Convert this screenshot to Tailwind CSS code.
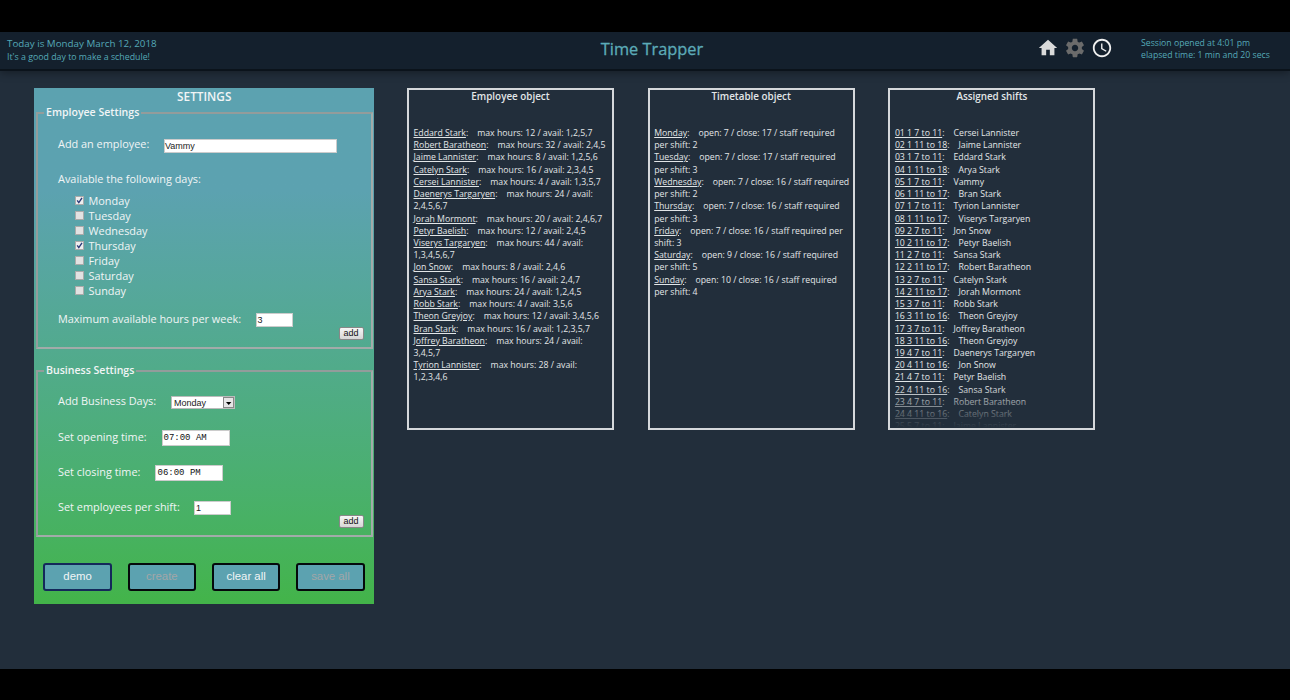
<!DOCTYPE html>
<html lang="en">
<head>
<meta charset="utf-8">
<title>Time Trapper</title>
<script src="https://cdn.jsdelivr.net/npm/@tailwindcss/browser@4"></script>
</head>
<body class="h-[700px] overflow-hidden bg-black py-8 font-['Open_Sans',sans-serif]">
<div class="flex h-[637px] flex-col bg-[#222e3b]">

  <header class="relative z-10 flex h-[39px] shrink-0 items-start border-b-2 border-[#0b131b] bg-[#14202d] text-[#55a9b7] shadow-[0_2px_8px_rgba(0,0,0,0.35)]">
    <div class="w-[552px] pt-[5px] pl-[7px]">
      <p class="text-[9.8px] leading-[14px]">Today is Monday March 12, 2018</p>
      <p class="text-[8.8px] leading-[12px]">It's a good day to make a schedule!</p>
    </div>
    <h1 class="w-[200px] pt-[5px] text-center text-[16.38px] leading-[24px] text-[#5cabb8] [-webkit-text-stroke:0.3px_#5cabb8]">Time Trapper</h1>
    <div class="ml-[285px] flex gap-[5px] pt-[5px]">
      <svg class="size-[22px]" viewBox="0 0 24 24" fill="#dadada"><path d="M10 20v-6h4v6h5v-8h3L12 3 2 12h3v8z"/></svg>
      <svg class="size-[22px]" viewBox="0 0 24 24" fill="#6b6b6b"><path d="M19.43 12.98c.04-.32.07-.64.07-.98s-.03-.66-.07-.98l2.11-1.65c.19-.15.24-.42.12-.64l-2-3.46c-.12-.22-.39-.3-.61-.22l-2.49 1c-.52-.4-1.08-.73-1.69-.98l-.38-2.65C14.46 2.18 14.25 2 14 2h-4c-.25 0-.46.18-.49.42l-.38 2.65c-.61.25-1.17.59-1.69.98l-2.49-1c-.23-.09-.49 0-.61.22l-2 3.46c-.13.22-.07.49.12.64l2.11 1.65c-.04.32-.07.65-.07.98s.03.66.07.98l-2.11 1.65c-.19.15-.24.42-.12.64l2 3.46c.12.22.39.3.61.22l2.49-1c.52.4 1.08.73 1.69.98l.38 2.65c.03.24.24.42.49.42h4c.25 0 .46-.18.49-.42l.38-2.65c.61-.25 1.17-.59 1.69-.98l2.49 1c.23.09.49 0 .61-.22l2-3.46c.12-.22.07-.49-.12-.64l-2.11-1.65zM12 15.5c-1.93 0-3.5-1.57-3.5-3.5s1.57-3.5 3.5-3.5 3.5 1.57 3.5 3.5-1.57 3.5-3.5 3.5z"/></svg>
      <svg class="size-[22px]" viewBox="0 0 24 24" fill="#f0f0f0"><path d="M11.99 2C6.47 2 2 6.48 2 12s4.47 10 9.99 10C17.52 22 22 17.52 22 12S17.52 2 11.99 2zM12 20c-4.42 0-8-3.58-8-8s3.58-8 8-8 8 3.58 8 8-3.58 8-8 8zm.5-13H11v6l5.25 3.15.75-1.23-4.5-2.67z"/></svg>
    </div>
    <div class="ml-[28px] pt-[5px] text-[8.7px] leading-[12.2px] whitespace-nowrap">
      <p>Session opened at 4:01 pm</p>
      <p>elapsed time: 1 min and 20 secs</p>
    </div>
  </header>

  <main class="flex items-start pt-[17px] pl-[34px] text-[#f1f5f6]">
    <section class="mr-[33.5px] flex h-[516px] w-[339.5px] shrink-0 flex-col bg-linear-to-b from-[#5ca2b0] from-20% to-[#43b449] to-100% pr-px pl-[2px] text-[10.9px] whitespace-nowrap">
      <h2 class="h-[17px] text-center text-[11.8px] leading-[16px] font-semibold">SETTINGS</h2>

      <fieldset class="h-[244px] min-w-0 border-2 border-t-[#939c9b] border-r-[#a2aba9] border-b-[#a2aba9] border-l-[#939c9b] [border-style:double] px-[20px]">
        <legend class="-ml-[14px] h-[15px] px-[2px] text-[10.55px] leading-[15px] font-semibold">Employee Settings</legend>
        <div class="mt-[17px] flex h-[16px] items-center">
          <span class="w-[106px] pb-[2px]">Add an employee:</span>
          <span class="mt-px h-[14px] w-[173px] border border-[#ccc] bg-white font-['Liberation_Sans',sans-serif] text-[9px] leading-[12px] text-[#222]">Vammy</span>
        </div>
        <p class="mt-[18px] h-[17px] leading-[16px]">Available the following days:</p>
        <ul class="mt-[5px] pl-[17px] leading-[15px]">
          <li class="flex h-[15px] items-center gap-[4.5px]"><svg class="size-[9px]" viewBox="0 0 9 9"><rect x=".5" y=".5" width="8" height="8" fill="#eee" stroke="#aaa"/><path d="M2.2 4.4 3.8 6.6 7 1.8" fill="none" stroke="#2b3a78" stroke-width="1.4"/></svg>Monday</li>
          <li class="flex h-[15px] items-center gap-[4.5px]"><svg class="size-[9px]" viewBox="0 0 9 9"><rect x=".5" y=".5" width="8" height="8" fill="#e2e2e2" stroke="#aaa"/></svg>Tuesday</li>
          <li class="flex h-[15px] items-center gap-[4.5px]"><svg class="size-[9px]" viewBox="0 0 9 9"><rect x=".5" y=".5" width="8" height="8" fill="#e2e2e2" stroke="#aaa"/></svg>Wednesday</li>
          <li class="flex h-[15px] items-center gap-[4.5px]"><svg class="size-[9px]" viewBox="0 0 9 9"><rect x=".5" y=".5" width="8" height="8" fill="#eee" stroke="#aaa"/><path d="M2.2 4.4 3.8 6.6 7 1.8" fill="none" stroke="#2b3a78" stroke-width="1.4"/></svg>Thursday</li>
          <li class="flex h-[15px] items-center gap-[4.5px]"><svg class="size-[9px]" viewBox="0 0 9 9"><rect x=".5" y=".5" width="8" height="8" fill="#e2e2e2" stroke="#aaa"/></svg>Friday</li>
          <li class="flex h-[15px] items-center gap-[4.5px]"><svg class="size-[9px]" viewBox="0 0 9 9"><rect x=".5" y=".5" width="8" height="8" fill="#e2e2e2" stroke="#aaa"/></svg>Saturday</li>
          <li class="flex h-[15px] items-center gap-[4.5px]"><svg class="size-[9px]" viewBox="0 0 9 9"><rect x=".5" y=".5" width="8" height="8" fill="#e2e2e2" stroke="#aaa"/></svg>Sunday</li>
        </ul>
        <div class="mt-[13px] flex h-[16px] items-center">
          <span class="w-[197.5px]">Maximum available hours per week:</span>
          <span class="mt-px h-[14px] w-[37px] border border-[#ccc] bg-white pl-px font-['Liberation_Sans',sans-serif] text-[9px] leading-[12px] text-[#222]">3</span>
        </div>
        <div class="-mr-[13px] flex justify-end"><span class="h-[13px] w-[25px] rounded-[2px] border border-[#888] bg-linear-to-b from-[#f6f6f6] to-[#d6d6d6] text-center font-['Liberation_Sans',sans-serif] text-[9px] leading-[11px] text-[#111]">add</span></div>
      </fieldset>

      <fieldset class="mt-[14px] h-[174px] min-w-0 border-2 border-t-[#939c9b] border-r-[#a2aba9] border-b-[#a2aba9] border-l-[#939c9b] [border-style:double] px-[20px]">
        <legend class="-ml-[14px] h-[15px] px-[2px] text-[10.55px] leading-[15px] font-semibold">Business Settings</legend>
        <div class="mt-[16px] flex h-[16px] items-center">
          <span class="w-[113px] pb-[2px]">Add Business Days:</span>
          <span class="mt-px flex h-[13px] w-[64px] border border-[#bbb] bg-white font-['Liberation_Sans',sans-serif] text-[9px] leading-[12px] text-[#222]">
            <span class="flex-1 pl-[2px]">Monday</span>
            <svg class="h-[11px] w-[11px]" viewBox="0 0 11 11"><rect x=".5" y=".5" width="10" height="10" fill="#e6e6e6" stroke="#888"/><path d="M3 5h5.4L5.7 8z" fill="#000"/></svg>
          </span>
        </div>
        <div class="mt-[19px] flex h-[16px] items-center">
          <span class="w-[103.5px]">Set opening time:</span>
          <span class="mt-px h-[16px] w-[68px] border border-[#ccc] bg-white pl-[1px] font-['Liberation_Mono',monospace] text-[9px] leading-[15px] text-[#111]">07:00 AM</span>
        </div>
        <div class="mt-[19px] flex h-[16px] items-center">
          <span class="w-[96.5px]">Set closing time:</span>
          <span class="mt-[2px] h-[16px] w-[68px] border border-[#ccc] bg-white pl-[2px] font-['Liberation_Mono',monospace] text-[9px] leading-[15px] text-[#111]">06:00 PM</span>
        </div>
        <div class="mt-[19px] flex h-[16px] items-center">
          <span class="w-[136px]">Set employees per shift:</span>
          <span class="mt-px h-[14px] w-[37px] border border-[#ccc] bg-white pl-px font-['Liberation_Sans',sans-serif] text-[9px] leading-[12px] text-[#222]">1</span>
        </div>
        <div class="-mr-[13px] flex justify-end"><span class="h-[13px] w-[25px] rounded-[2px] border border-[#888] bg-linear-to-b from-[#f6f6f6] to-[#d6d6d6] text-center font-['Liberation_Sans',sans-serif] text-[9px] leading-[11px] text-[#111]">add</span></div>
      </fieldset>

      <div class="mt-[26px] flex gap-[16px] pl-[7.4px] font-['Liberation_Sans',sans-serif] text-[11.35px]">
        <button class="h-[28px] w-[68.3px] shrink-0 rounded-[3px] border-2 border-[#14285a] bg-[#5ca2b0]">demo</button>
        <button class="h-[28px] w-[68.3px] shrink-0 rounded-[3px] border-2 border-[#05090b] bg-[#5ca2b0] text-[#a3a6a8]">create</button>
        <button class="h-[28px] w-[68.3px] shrink-0 rounded-[3px] border-2 border-[#05090b] bg-[#5ca2b0]">clear all</button>
        <button class="h-[28px] w-[68.3px] shrink-0 rounded-[3px] border-2 border-[#05090b] bg-[#5ca2b0] text-[#a3a6a8]">save all</button>
      </div>
    </section>

    <div class="flex gap-[33.7px] text-[8.72px] leading-[12.22px] whitespace-nowrap text-[#e2e6e8]">
      <section class="h-[342px] w-[207px] border-2 border-[#d5d8db] pl-[4.5px]">
        <h2 class="h-[37px] pr-[4.5px] text-center text-[9.85px] leading-[13px] font-semibold">Employee object</h2>
        <p><u>Eddard Stark</u>:<span class="ml-[9px]">max hours: 12 / avail: 1,2,5,7</span></p>
        <p><u>Robert Baratheon</u>:<span class="ml-[9px]">max hours: 32 / avail: 2,4,5</span></p>
        <p><u>Jaime Lannister</u>:<span class="ml-[9px]">max hours: 8 / avail: 1,2,5,6</span></p>
        <p><u>Catelyn Stark</u>:<span class="ml-[9px]">max hours: 16 / avail: 2,3,4,5</span></p>
        <p><u>Cersei Lannister</u>:<span class="ml-[9px]">max hours: 4 / avail: 1,3,5,7</span></p>
        <p><u>Daenerys Targaryen</u>:<span class="ml-[9px]">max hours: 24 / avail:<br>2,4,5,6,7</span></p>
        <p><u>Jorah Mormont</u>:<span class="ml-[9px]">max hours: 20 / avail: 2,4,6,7</span></p>
        <p><u>Petyr Baelish</u>:<span class="ml-[9px]">max hours: 12 / avail: 2,4,5</span></p>
        <p><u>Viserys Targaryen</u>:<span class="ml-[9px]">max hours: 44 / avail:<br>1,3,4,5,6,7</span></p>
        <p><u>Jon Snow</u>:<span class="ml-[9px]">max hours: 8 / avail: 2,4,6</span></p>
        <p><u>Sansa Stark</u>:<span class="ml-[9px]">max hours: 16 / avail: 2,4,7</span></p>
        <p><u>Arya Stark</u>:<span class="ml-[9px]">max hours: 24 / avail: 1,2,4,5</span></p>
        <p><u>Robb Stark</u>:<span class="ml-[9px]">max hours: 4 / avail: 3,5,6</span></p>
        <p><u>Theon Greyjoy</u>:<span class="ml-[9px]">max hours: 12 / avail: 3,4,5,6</span></p>
        <p><u>Bran Stark</u>:<span class="ml-[9px]">max hours: 16 / avail: 1,2,3,5,7</span></p>
        <p><u>Joffrey Baratheon</u>:<span class="ml-[9px]">max hours: 24 / avail:<br>3,4,5,7</span></p>
        <p><u>Tyrion Lannister</u>:<span class="ml-[9px]">max hours: 28 / avail:<br>1,2,3,4,6</span></p>
      </section>

      <section class="h-[342px] w-[207px] border-2 border-[#d5d8db] pl-[4.5px]">
        <h2 class="h-[37px] pr-[4.5px] text-center text-[9.85px] leading-[13px] font-semibold">Timetable object</h2>
        <p><u>Monday</u>:<span class="ml-[9px]">open: 7 / close: 17 / staff required<br>per shift: 2</span></p>
        <p><u>Tuesday</u>:<span class="ml-[9px]">open: 7 / close: 17 / staff required<br>per shift: 3</span></p>
        <p><u>Wednesday</u>:<span class="ml-[9px]">open: 7 / close: 16 / staff required<br>per shift: 2</span></p>
        <p><u>Thursday</u>:<span class="ml-[9px]">open: 7 / close: 16 / staff required<br>per shift: 3</span></p>
        <p><u>Friday</u>:<span class="ml-[9px]">open: 7 / close: 16 / staff required per<br>shift: 3</span></p>
        <p><u>Saturday</u>:<span class="ml-[9px]">open: 9 / close: 16 / staff required<br>per shift: 5</span></p>
        <p><u>Sunday</u>:<span class="ml-[9px]">open: 10 / close: 16 / staff required<br>per shift: 4</span></p>
      </section>

      <section class="relative h-[342px] w-[207px] overflow-hidden border-2 border-[#d5d8db] pl-[4.5px]">
        <h2 class="h-[37px] pr-[4.5px] text-center text-[9.85px] leading-[13px] font-semibold">Assigned shifts</h2>
        <p><u>01 1 7 to 11</u>:<span class="ml-[9px]">Cersei Lannister</span></p>
        <p><u>02 1 11 to 18</u>:<span class="ml-[9px]">Jaime Lannister</span></p>
        <p><u>03 1 7 to 11</u>:<span class="ml-[9px]">Eddard Stark</span></p>
        <p><u>04 1 11 to 18</u>:<span class="ml-[9px]">Arya Stark</span></p>
        <p><u>05 1 7 to 11</u>:<span class="ml-[9px]">Vammy</span></p>
        <p><u>06 1 11 to 17</u>:<span class="ml-[9px]">Bran Stark</span></p>
        <p><u>07 1 7 to 11</u>:<span class="ml-[9px]">Tyrion Lannister</span></p>
        <p><u>08 1 11 to 17</u>:<span class="ml-[9px]">Viserys Targaryen</span></p>
        <p><u>09 2 7 to 11</u>:<span class="ml-[9px]">Jon Snow</span></p>
        <p><u>10 2 11 to 17</u>:<span class="ml-[9px]">Petyr Baelish</span></p>
        <p><u>11 2 7 to 11</u>:<span class="ml-[9px]">Sansa Stark</span></p>
        <p><u>12 2 11 to 17</u>:<span class="ml-[9px]">Robert Baratheon</span></p>
        <p><u>13 2 7 to 11</u>:<span class="ml-[9px]">Catelyn Stark</span></p>
        <p><u>14 2 11 to 17</u>:<span class="ml-[9px]">Jorah Mormont</span></p>
        <p><u>15 3 7 to 11</u>:<span class="ml-[9px]">Robb Stark</span></p>
        <p><u>16 3 11 to 16</u>:<span class="ml-[9px]">Theon Greyjoy</span></p>
        <p><u>17 3 7 to 11</u>:<span class="ml-[9px]">Joffrey Baratheon</span></p>
        <p><u>18 3 11 to 16</u>:<span class="ml-[9px]">Theon Greyjoy</span></p>
        <p><u>19 4 7 to 11</u>:<span class="ml-[9px]">Daenerys Targaryen</span></p>
        <p><u>20 4 11 to 16</u>:<span class="ml-[9px]">Jon Snow</span></p>
        <p><u>21 4 7 to 11</u>:<span class="ml-[9px]">Petyr Baelish</span></p>
        <p><u>22 4 11 to 16</u>:<span class="ml-[9px]">Sansa Stark</span></p>
        <p><u>23 4 7 to 11</u>:<span class="ml-[9px]">Robert Baratheon</span></p>
        <p><u>24 4 11 to 16</u>:<span class="ml-[9px]">Catelyn Stark</span></p>
        <p><u>25 5 7 to 11</u>:<span class="ml-[9px]">Jaime Lannister</span></p>
        <div class="absolute inset-x-0 bottom-0 h-[42px] bg-linear-to-b from-[#222e3b]/0 to-[#222e3b]"></div>
      </section>
    </div>
  </main>
</div>
</body>
</html>
